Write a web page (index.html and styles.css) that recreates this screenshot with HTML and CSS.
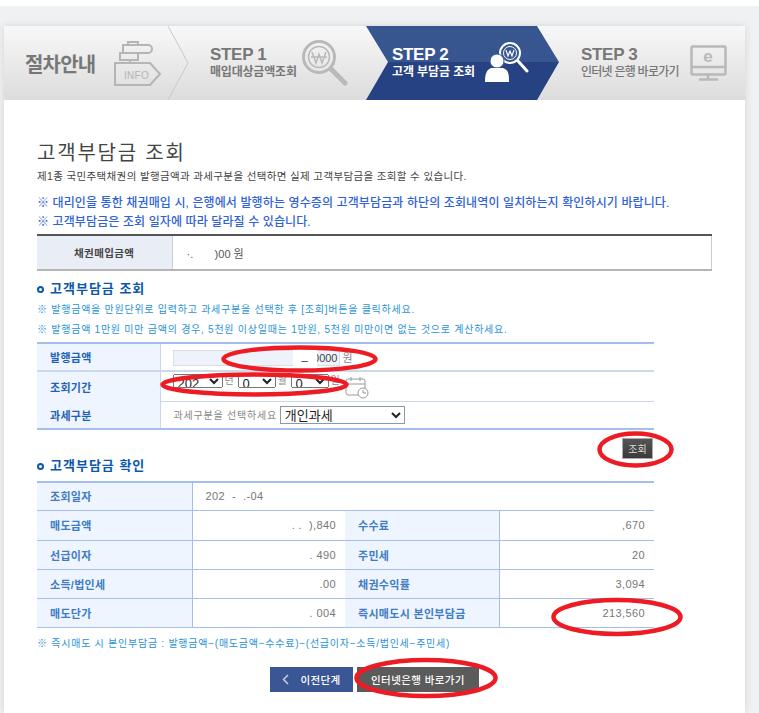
FILE: index.html
```html
<!DOCTYPE html>
<html lang="ko">
<head>
<meta charset="utf-8">
<title>고객부담금 조회</title>
<link rel="stylesheet" href="styles.css">
</head>
<body>
<div class="page">
  <div class="card">
    <header class="steps">
      <div class="step intro">
        <span class="intro-label">절차안내</span>
        <svg class="ico-info" viewBox="0 0 48 45" width="48" height="45" fill="none" stroke="#b5b5b5" stroke-width="2">
          <path d="M14 4V1h10v3M9 4h25a4 4 0 0 1 0 8H9zM6 12h18v7H6zM16 19v3"/>
          <path d="M1 22h35l10 11-10 11H1z"/>
          <text x="10" y="38" class="ico-text">INFO</text>
        </svg>
        <svg class="sep" viewBox="0 0 21 74" width="21" height="74" fill="none" stroke="#c8c8c8"><path d="M0 0l20 37-20 37"/></svg>
      </div>
      <div class="step one">
        <div class="step-text">
          <strong class="step-no">STEP 1</strong>
          <span class="step-sub">매입대상금액조회</span>
        </div>
        <svg class="ico-search" viewBox="0 0 46 46" width="46" height="46" fill="none" stroke="#b9b9b9">
          <circle cx="17" cy="17" r="15.500" stroke-width="3"/>
          <circle cx="17" cy="17" r="10.500" stroke-width="1.500"/>
          <path d="M29 29l14 14" stroke-width="5" stroke-linecap="round"/>
          <path d="M10 12l4 11 3-9 3 9 4-11M9 17h16" stroke-width="1.500"/>
        </svg>
      </div>
      <div class="step two">
        <div class="step-text">
          <strong class="step-no">STEP 2</strong>
          <span class="step-sub">고객 부담금 조회</span>
        </div>
        <svg class="ico-person" viewBox="0 0 44 42" width="44" height="42" fill="none" stroke="#fff">
          <circle cx="25" cy="11" r="10" stroke-width="2"/>
          <circle cx="25" cy="11" r="6.500" stroke-width="1"/>
          <path d="M33 19l9 10" stroke-width="3" stroke-linecap="round"/>
          <path d="M21 8l2 6 2-5 2 5 2-6" stroke-width="1.200"/>
          <circle cx="12" cy="19" r="7" fill="#fff" stroke="#37568f" stroke-width="1"/>
          <path d="M0 40c0-7 1-12 6-14h12c6 2 6 7 6 14z" fill="#fff" stroke="none"/>
        </svg>
      </div>
      <div class="step three">
        <div class="step-text">
          <strong class="step-no">STEP 3</strong>
          <span class="step-sub">인터넷 은행 바로가기</span>
        </div>
        <svg class="ico-monitor" viewBox="0 0 38 36" width="38" height="36" fill="none" stroke="#b9b9b9" stroke-width="2.500">
          <rect x="1.500" y="1.500" width="34" height="28" rx="1"/>
          <path d="M1.500 22h34M18 30v4M9 34.500h19"/>
          <text x="18" y="17" class="ico-e">e</text>
        </svg>
      </div>
    </header>

    <main class="content">
      <h1 class="title">고객부담금 조회</h1>
      <p class="lead">제1종 국민주택채권의 발행금액과 과세구분을 선택하면 실제 고객부담금을 조회할 수 있습니다.</p>
      <p class="alert first">※ 대리인을 통한 채권매입 시, 은행에서 발행하는 영수증의 고객부담금과 하단의 조회내역이 일치하는지 확인하시기 바랍니다.</p>
      <p class="alert">※ 고객부담금은 조회 일자에 따라 달라질 수 있습니다.</p>

      <table class="info">
        <tr>
          <th>채권매입금액</th>
          <td><span class="masked">·.       )00 원</span></td>
        </tr>
      </table>

      <h2 class="section"><span class="ring"></span>고객부담금 조회</h2>
      <p class="note">※ 발행금액을 만원단위로 입력하고 과세구분을 선택한 후 [조회]버튼을 클릭하세요.</p>
      <p class="note gap">※ 발행금액 1만원 미만 금액의 경우, 5천원 이상일때는 1만원, 5천원 미만이면 없는 것으로 계산하세요.</p>

      <table class="form">
        <tr class="r1">
          <th>발행금액</th>
          <td>
            <div class="field">
              <span class="amount"><input class="amount-input" type="text" value="0000" aria-label="발행금액"><span class="mask">_</span></span>
              <span class="unit-amount">원</span>
            </div>
          </td>
        </tr>
        <tr class="r2">
          <th>조회기간</th>
          <td class="dates">
            <div class="date-row">
              <select class="sel-y" aria-label="년"><option>202</option></select><span class="unit">년</span>
              <select class="sel-m" aria-label="월"><option>0</option></select><span class="unit">월</span>
              <select class="sel-m" aria-label="일"><option>0</option></select><span class="unit last">일</span>
              <svg class="cal" viewBox="0 0 24 23" width="24" height="23" fill="none" stroke="#9a9a9a">
                <rect x="1" y="3" width="19" height="16" rx="2" fill="#fff"/>
                <path d="M1 8h19M6 1v4M15 1v4"/>
                <circle cx="18" cy="17" r="5" fill="#fff"/>
                <path d="M18 14v3h3"/>
              </svg>
            </div>
          </td>
        </tr>
        <tr class="r3">
          <th>과세구분</th>
          <td class="tax">
            <div class="field">
              <span class="tax-label">과세구분을 선택하세요</span>
              <select class="sel-tax" aria-label="과세구분"><option>개인과세</option></select>
            </div>
          </td>
        </tr>
      </table>

      <div class="query-row"><button class="query" type="button">조회</button></div>

      <h2 class="section second"><span class="ring"></span>고객부담금 확인</h2>

      <table class="result">
        <colgroup><col class="c1"><col class="c2"><col class="c3"><col class="c4"></colgroup>
        <tr class="first-row"><th>조회일자</th><td colspan="3" class="date">202  -  .-04</td></tr>
        <tr class="second-row"><th>매도금액</th><td>. .  ),840</td><th class="mid">수수료</th><td>,670</td></tr>
        <tr><th>선급이자</th><td>. 490</td><th class="mid">주민세</th><td>20</td></tr>
        <tr><th>소득/법인세</th><td>.00</td><th class="mid">채권수익률</th><td>3,094</td></tr>
        <tr><th>매도단가</th><td>. 004</td><th class="mid">즉시매도시 본인부담금</th><td>213,560</td></tr>
      </table>

      <p class="note foot">※ 즉시매도 시 본인부담금 : 발행금액−(매도금액−수수료)−(선급이자−소득/법인세−주민세)</p>

      <div class="actions">
        <button class="btn prev" type="button"><svg class="chev" viewBox="0 0 7 11" width="7" height="11" fill="none" stroke="#c8cfe0" stroke-width="1.500"><path d="M6 1L1.500 5.500 6 10"/></svg>이전단계</button>
        <button class="btn next" type="button">인터넷은행 바로가기</button>
      </div>
    </main>
  </div>
</div>

<svg class="marks" viewBox="0 0 759 713" width="759" height="713" fill="none" stroke="#ed1c24" stroke-width="4.500" aria-hidden="true">
  <ellipse cx="299.500" cy="359" rx="76" ry="11.500"/>
  <ellipse cx="254.500" cy="384.500" rx="92" ry="10"/>
  <ellipse cx="635.500" cy="449.500" rx="36" ry="16"/>
  <ellipse cx="617" cy="617" rx="63.500" ry="17"/>
  <ellipse cx="426" cy="678" rx="69.500" ry="18"/>
</svg>
</body>
</html>
```

FILE: styles.css
```css
* { box-sizing: border-box; }
html, body { margin: 0; padding: 0; }
body {
  position: relative;
  width: 759px;
  height: 713px;
  overflow: hidden;
  padding-top: 6px;
  background: #fff;
  font-family: "Liberation Sans", "Noto Sans CJK KR", sans-serif;
  color: #444;
}
.page {
  height: 707px;
  padding: 20px 14px 0 4px;
  background: #f0f1f3;
  overflow: hidden;
}
.card {
  height: 687px;
  background: #fff;
  box-shadow: 0 0 8px rgba(0, 0, 0, .12);
}

/* step header */
.steps {
  display: flex;
  height: 74px;
  background: linear-gradient(#f8f8f8, #dcdcdc);
}
.step { position: relative; display: flex; align-items: center; height: 74px; flex: none; }
.intro { width: 164px; padding-left: 21px; }
.intro-label { font-size: 20px; font-weight: 700; color: #777; width: 89px; white-space: nowrap; letter-spacing: -.8px; }
.ico-info { margin-top: 1px; }
.sep { position: absolute; left: 164px; top: 0; }
.ico-text { font: 10px "Liberation Sans", sans-serif; fill: #b5b5b5; stroke: none; letter-spacing: .3px; }
.one { width: 198px; padding-left: 42px; }
.one .step-text { width: 92px; }
.two {
  width: 193px;
  padding-left: 26px;
  background: linear-gradient(#37568f 0, #37568f 49%, #274282 49%, #274282 100%);
  clip-path: polygon(0 0, 171px 0, 193px 36px, 171px 74px, 0 74px, 22px 36px);
}
.two .step-text { width: 93px; }
.three { width: 186px; padding-left: 22px; }
.three .step-text { width: 109px; }
.step-text { display: flex; flex-direction: column; flex: none; color: #777; }
.two .step-text { color: #fff; }
.step-no { font-size: 17px; line-height: 18px; font-weight: 700; white-space: nowrap; letter-spacing: -.3px; }
.step-sub { font-size: 12px; line-height: 16px; font-weight: 700; white-space: nowrap; letter-spacing: -.2px; }
.two .step-sub { letter-spacing: -.1px; }
.three .step-sub { font-weight: 500; letter-spacing: -.75px; }
.ico-e { font: 700 17px "Liberation Sans", sans-serif; fill: #b9b9b9; stroke: none; text-anchor: middle; }

/* content */
.content { padding: 41px 33px 0; }
.title { margin: 0; font-size: 20px; line-height: 24px; font-weight: 400; color: #444; letter-spacing: 1.800px; white-space: nowrap; }
.lead { margin: 3px 0 0; font-size: 10.500px; line-height: 16px; color: #444; letter-spacing: .36px; white-space: nowrap; }
.alert { margin: 0; font-size: 12px; line-height: 19px; color: #2f62d8; font-weight: 500; letter-spacing: .11px; white-space: nowrap; }
.alert.first { margin-top: 10px; }

table { border-collapse: collapse; border-spacing: 0; table-layout: fixed; }
.info { margin-top: 2px; width: 675px; border-top: 2px solid #555; border-bottom: 2px solid #b5b5b5; border-right: 1px solid #ccc; }
.info th { width: 135px; height: 35px; background: #e9edf5; border-right: 1px solid #ccc; font-size: 10.500px; font-weight: 700; color: #444; letter-spacing: .4px; }
.info td { padding-left: 14px; font-size: 11px; color: #555; }
.masked { white-space: pre; }

.section { display: flex; align-items: center; margin: 9px 0 0; font-size: 13px; line-height: 18px; font-weight: 700; color: #0b57ab; letter-spacing: 1px; }
.section.second { margin-top: -2px; }
.ring { width: 7px; height: 7px; margin-right: 6px; border: 2px solid #0b57ab; border-radius: 50%; flex: none; }
.note { margin: 4px 0 0; font-size: 10px; line-height: 15px; color: #2b93d6; letter-spacing: .75px; white-space: nowrap; }
.note.gap { margin-top: 5px; }

.form { margin-top: 5px; width: 617px; border-top: 2px solid #a4bfee; border-bottom: 2px solid #a4bfee; }
.form th { width: 123px; padding-left: 13px; text-align: left; background: #eef5ff; border-right: 1px solid #c8d6ee; font-size: 11px; font-weight: 700; color: #1f62b5; letter-spacing: .3px; }
.form td { padding: 0 0 0 12px; font-size: 10px; color: #888; white-space: nowrap; }
.form td.tax { padding-left: 13px; }
.r1 th, .r1 td { height: 28px; border-bottom: 2px solid #cdd9ea; }
.r2 th, .r2 td { height: 30px; border-bottom: 1px solid #cdd9ea; }
.r2 th { border-bottom: 0; }
.r3 th, .r3 td { height: 28px; }
.field { display: flex; align-items: center; gap: 3px; }
.amount { position: relative; display: block; margin-top: 1px; }
.amount-input { display: block; width: 167px; height: 16px; padding: 0 1px 0 0; border: 1px solid #ddd; background: #eef2fb; text-align: right; font: 11px "Liberation Sans", sans-serif; color: #444; }
.mask { position: absolute; left: 120px; top: 0; width: 24px; height: 16px; background: #fff; color: #222; font-size: 11px; line-height: 12px; text-align: center; }
.unit-amount { font-size: 11px; color: #888; }
.dates { vertical-align: top; padding-top: 2px !important; }
.date-row { display: flex; align-items: flex-start; }
.date-row select { height: 14px; padding: 0; font: 13px "Liberation Sans", sans-serif; color: #222; flex: none; }
.unit { width: 15px; padding-left: 2px; font-size: 10px; line-height: 13px; color: #888; flex: none; }
.unit.last { width: 11px; }
.sel-y { width: 50px; }
.sel-m { width: 38px; }
.cal { margin-top: 2px; margin-left: 5px; flex: none; }
.tax { vertical-align: middle; }
.tax-label { letter-spacing: .78px; }
.sel-tax { width: 125px; height: 18px; padding: 0; border: 1px solid #8a9aa8; background: #fff; font: 13px "Liberation Sans", "Noto Sans CJK KR", sans-serif; color: #222; }

.query-row { display: flex; justify-content: flex-end; width: 616px; padding-top: 8px; }
.query { width: 31px; height: 21px; padding: 0; border: 1px solid #aaa; background: linear-gradient(#555, #3a3a3a); color: #ddd; font: 10px "Liberation Sans", "Noto Sans CJK KR", sans-serif; }

.result { margin-top: 6px; width: 617px; border-top: 2px solid #a4bfee; }
.c1 { width: 155px; }
.c2 { width: 153px; }
.c3 { width: 154px; }
.c4 { width: 155px; }
.result th { padding-left: 13px; text-align: left; background: #eef5ff; font-size: 11px; font-weight: 700; color: #3f7cc4; letter-spacing: .3px; white-space: nowrap; }
.result th, .result td { height: 29px; border-bottom: 1px solid #a4bfee; }
.result th:first-child { border-right: 1px solid #a4bfee; }
.result th.mid { border-right: 1px solid #a4bfee; }
.result td { padding-right: 9px; text-align: right; font-size: 11px; color: #777; letter-spacing: .4px; white-space: pre; }
.result td.date { text-align: left; padding-left: 13px; }
.first-row th, .first-row td { height: 28px; }
.second-row th, .second-row td { height: 30px; }

.note.foot { margin-top: 8px; }
.actions { display: flex; gap: 4px; margin-top: 16px; margin-left: 233px; }
.btn { display: flex; align-items: center; justify-content: center; height: 25px; padding: 0; border: 0; color: #fff; font: 500 10.500px "Liberation Sans", "Noto Sans CJK KR", sans-serif; letter-spacing: .4px; }
.prev { width: 83px; background: #3a5694; }
.chev { margin-right: 11px; }
.next { width: 122px; background: #5b5b5b; }

.marks { position: absolute; left: 0; top: 0; pointer-events: none; }
```
